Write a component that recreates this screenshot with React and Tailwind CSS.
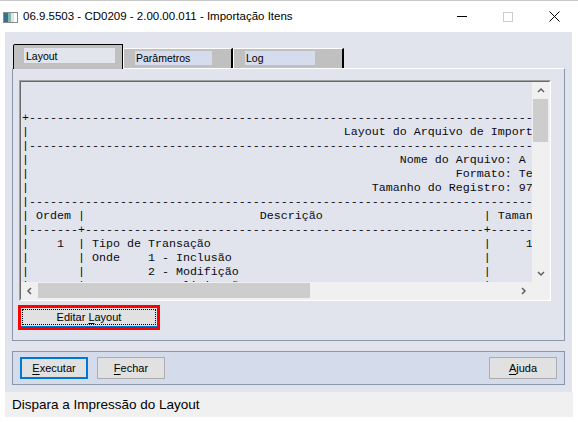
import React from "react";

const pad = (s, n) => s + " ".repeat(Math.max(0, n - s.length));
const dash = "-".repeat(100);
const lines = [
  "",
  "",
  "+" + dash,
  pad("|", 46) + "Layout do Arquivo de Importação",
  "|" + dash,
  pad("|", 54) + "Nome do Arquivo: A Definir",
  pad("|", 62) + "Formato: Texto",
  pad("|", 50) + "Tamanho do Registro: 97",
  "|" + dash,
  pad(pad("| Ordem |", 34) + "Descrição", 66) + "| Tamanho",
  "|-------+" + "-".repeat(57) + "+" + dash,
  pad(pad("|    1  | Tipo de Transação", 66) + "|", 72) + "1",
  pad("|       | Onde    1 - Inclusão", 66) + "|",
  pad("|       |         2 - Modifição", 66) + "|",
  pad("|       |         3 - Eliminação", 66) + "|",
];

function Chevron({ dir }) {
  const pts = {
    up: "1,5 4,2 7,5",
    down: "1,2 4,5 7,2",
    left: "5,1 2,4 5,7",
    right: "2,1 5,4 2,7",
  }[dir];
  return (
    <svg width="8" height="8" viewBox="0 0 8 8">
      <polyline points={pts} fill="none" stroke="#606060" strokeWidth="1.5" />
    </svg>
  );
}

function Btn({ children, focus }) {
  return (
    <div
      className={
        "w-[68px] h-[22px] flex items-center justify-center bg-[#e1e1e1] text-[11px] text-black " +
        (focus ? "border-2 border-[#0078d7]" : "border border-[#adadad]")
      }
    >
      {children}
    </div>
  );
}

export default function App() {
  return (
    <div className="w-[578px] h-[422px] bg-white overflow-hidden font-['Liberation_Sans',Arial,sans-serif] text-black">
      <div className="h-px bg-[#c8c8c8]" />
      {/* Title bar */}
      <div className="h-[31px] flex items-center relative">
        <svg className="ml-[3px] mt-[1px]" width="15" height="11" viewBox="0 0 15 11">
          <rect x="0.5" y="0.5" width="14" height="10" fill="#ffffff" stroke="#8a8a8a" />
          <rect x="1" y="1" width="4" height="9" fill="#3a6f8f" />
          <rect x="5" y="1" width="3" height="9" fill="#7fb9a9" />
          <rect x="8" y="1" width="3" height="9" fill="#d9e6ea" />
        </svg>
        <span className="ml-[5px] text-[11.5px] text-black">06.9.5503 - CD0209 - 2.00.00.011 - Importação Itens</span>
        <div className="ml-auto flex items-center h-full">
          <div className="w-[46px] h-full flex items-center justify-center">
            <div className="w-[10px] h-px bg-black" />
          </div>
          <div className="w-[46px] h-full flex items-center justify-center">
            <div className="w-[10px] h-[10px] border border-[#cccccc]" />
          </div>
          <div className="w-[46px] h-full flex items-center justify-center mr-[1px]">
            <svg width="11" height="11" viewBox="0 0 11 11">
              <path d="M0.5 0.5 L10.5 10.5 M10.5 0.5 L0.5 10.5" stroke="#000" strokeWidth="1" />
            </svg>
          </div>
        </div>
      </div>

      {/* Client area */}
      <div className="ml-[5px] w-[567px] h-[360px] bg-[#e1e4ec] pt-[12px] pb-[7px] flex flex-col">
        {/* Tabs */}
        <div className="ml-[8px] h-[24px] flex items-end relative z-10">
          <div className="w-[110px] h-[25px] -mb-px bg-[#c0c0c0] border-t border-l border-r border-black rounded-tl-[2px] pt-[3px] pl-[10px]">
            <div className="w-[91px] h-[15px] bg-[#e2e5ec] text-[10.5px] leading-[16px] pl-[2px]">Layout</div>
          </div>
          <div className="w-[110px] h-[20px] bg-[#c0c0c0] border-t border-l border-white border-r-2 border-r-black pt-[2px] pl-[11px]">
            <div className="w-[77px] h-[14px] bg-[#d4dcee] text-[10.5px] leading-[15px] pl-[1px]">Parâmetros</div>
          </div>
          <div className="w-[111px] h-[20px] bg-[#c0c0c0] border-t border-l border-white border-r-2 border-r-black pt-[2px] pl-[11px]">
            <div className="w-[70px] h-[14px] bg-[#d4dcee] text-[10.5px] leading-[15px] pl-[1px]">Log</div>
          </div>
        </div>

        {/* Panel */}
        <div className="ml-[7px] w-[553px] h-[273px] border border-[#8a96aa] border-t-white pt-[11px] pl-[6px] flex flex-col">
          {/* Text box */}
          <div className="w-[532px] h-[221px] border border-[#a0a0a0] border-b-white border-r-white">
            <div className="w-full h-full border border-[#696969] border-b-[#f0f0f0] border-r-[#f0f0f0] flex flex-col">
              <div className="flex h-[200px]">
                <div className="w-[511px] h-full overflow-hidden pt-px pl-px">
                  <div className="font-['Liberation_Mono','Courier_New',monospace] text-[11.67px] leading-[14px] whitespace-pre text-[#0a0a14]">
                    {lines.map((l, i) => (
                      <div key={i} className="h-[14px]">{l}</div>
                    ))}
                  </div>
                </div>
                <div className="w-[17px] h-full bg-[#f0f0f0] flex flex-col items-center">
                  <div className="h-[17px] w-full flex items-center justify-center">
                    <Chevron dir="up" />
                  </div>
                  <div className="w-[15px] h-[43px] bg-[#cdcdcd]" />
                  <div className="flex-1" />
                  <div className="h-[17px] w-full flex items-center justify-center">
                    <Chevron dir="down" />
                  </div>
                </div>
              </div>
              <div className="flex h-[17px]">
                <div className="w-[511px] h-full bg-[#f0f0f0] flex items-center">
                  <div className="w-[17px] h-full flex items-center justify-center">
                    <Chevron dir="left" />
                  </div>
                  <div className="w-[272px] h-[15px] bg-[#cdcdcd]" />
                  <div className="flex-1" />
                  <div className="w-[17px] h-full flex items-center justify-center">
                    <Chevron dir="right" />
                  </div>
                </div>
                <div className="w-[17px] h-full bg-[#f0f0f0]" />
              </div>
            </div>
          </div>
          {/* Editar Layout */}
          <div className="mt-[4px] -ml-px w-[142px] h-[25px] border-[3px] border-[#ff0000]">
            <div className="w-full h-full bg-[#e1e1e1] border-b border-[#0078d7] p-px">
              <div className="w-full h-full border border-dotted border-black flex items-center justify-center text-[11px] leading-none">
                <span>
                  Editar <span className="underline underline-offset-2">L</span>ayout
                </span>
              </div>
            </div>
          </div>
        </div>

        {/* Bottom buttons panel */}
        <div className="mt-[10px] ml-[7px] w-[553px] h-[34px] bg-[#d4dcec] border border-[#8a96aa] flex items-center px-[7px] gap-[9px]">
          <Btn focus>
            <span>
              <span className="underline underline-offset-2">E</span>xecutar
            </span>
          </Btn>
          <Btn>
            <span>
              <span className="underline underline-offset-2">F</span>echar
            </span>
          </Btn>
          <div className="flex-1" />
          <Btn>
            <span>
              <span className="underline underline-offset-2">A</span>juda
            </span>
          </Btn>
        </div>
      </div>

      {/* Status bar */}
      <div className="ml-[5px] w-[568px] h-[25px] bg-[#f0f0f0] flex items-center pl-[7px] pt-[2px] text-[13.5px]">
        Dispara a Impressão do Layout
      </div>
    </div>
  );
}
